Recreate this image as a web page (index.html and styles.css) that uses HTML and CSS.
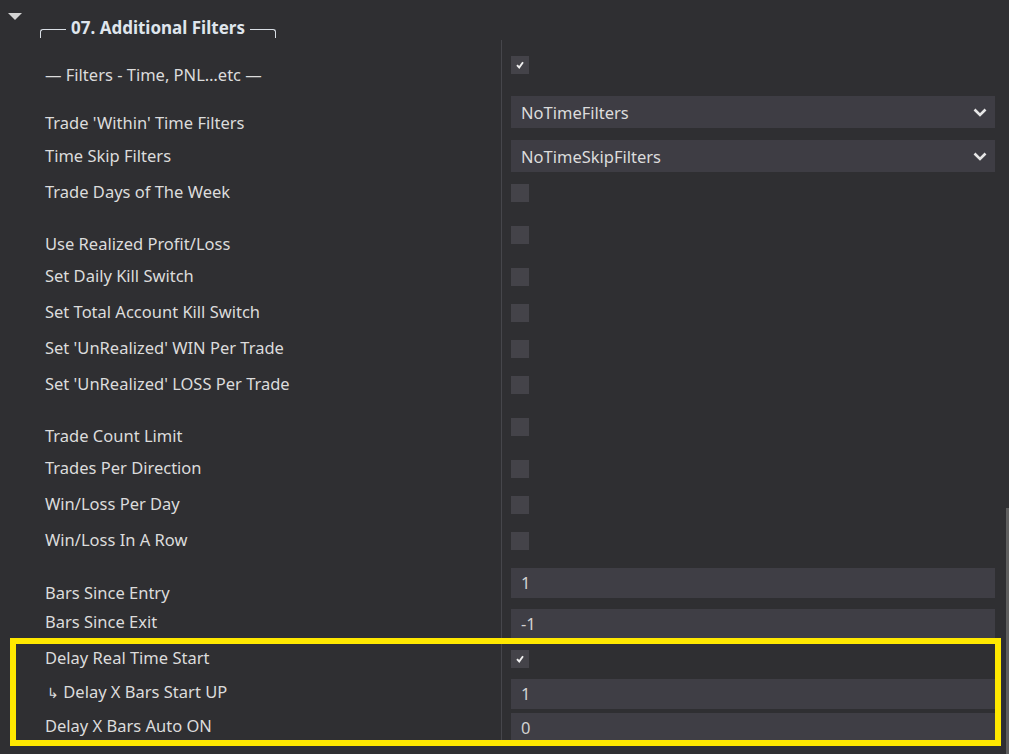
FILE: index.html
```html
<!DOCTYPE html>
<html lang="en">
<head>
    <meta charset="UTF-8">
    <title>07. Additional Filters</title>
    <link rel="stylesheet" href="styles.css">
</head>
<body>
    <div class="window">
        <div class="grid">
            <!-- Category header -->
            <div class="category">
                <span class="toggle"></span>
                <span class="bracket left"></span>
                <span class="category-title">07. Additional Filters</span>
                <span class="bracket right"></span>
            </div>

            <div class="row row-heading">
                <div class="label">— Filters - Time, PNL…etc —</div>
                <div class="value"><span class="check on"><svg viewBox="0 0 8 8" width="8" height="8"><path d="M1 4.2 L3.2 6.5 L7 1.2" fill="none" stroke="#f0f0f0" stroke-width="1.9"/></svg></span></div>
            </div>
            <div class="row row-select-lead">
                <div class="label">Trade 'Within' Time Filters</div>
                <div class="value">
                    <div class="select">NoTimeFilters<svg viewBox="0 0 14 9" width="14" height="9"><path d="M1.5 1.5 L7 7 L12.5 1.5" fill="none" stroke="#e6e6e6" stroke-width="2.6"/></svg></div>
                </div>
            </div>
            <div class="row row-select">
                <div class="label">Time Skip Filters</div>
                <div class="value">
                    <div class="select">NoTimeSkipFilters<svg viewBox="0 0 14 9" width="14" height="9"><path d="M1.5 1.5 L7 7 L12.5 1.5" fill="none" stroke="#e6e6e6" stroke-width="2.6"/></svg></div>
                </div>
            </div>
            <div class="row">
                <div class="label">Trade Days of The Week</div>
                <div class="value"><span class="check"></span></div>
            </div>

            <div class="row row-lead">
                <div class="label">Use Realized Profit/Loss</div>
                <div class="value"><span class="check"></span></div>
            </div>
            <div class="row">
                <div class="label">Set Daily Kill Switch</div>
                <div class="value"><span class="check"></span></div>
            </div>
            <div class="row">
                <div class="label">Set Total Account Kill Switch</div>
                <div class="value"><span class="check"></span></div>
            </div>
            <div class="row">
                <div class="label">Set 'UnRealized' WIN Per Trade</div>
                <div class="value"><span class="check"></span></div>
            </div>
            <div class="row">
                <div class="label">Set 'UnRealized' LOSS Per Trade</div>
                <div class="value"><span class="check"></span></div>
            </div>

            <div class="row row-lead">
                <div class="label">Trade Count Limit</div>
                <div class="value"><span class="check"></span></div>
            </div>
            <div class="row">
                <div class="label">Trades Per Direction</div>
                <div class="value"><span class="check"></span></div>
            </div>
            <div class="row">
                <div class="label">Win/Loss Per Day</div>
                <div class="value"><span class="check"></span></div>
            </div>
            <div class="row">
                <div class="label">Win/Loss In A Row</div>
                <div class="value"><span class="check"></span></div>
            </div>

            <div class="row row-num-lead">
                <div class="label">Bars Since Entry</div>
                <div class="value"><div class="num">1</div></div>
            </div>
            <div class="row row-num">
                <div class="label">Bars Since Exit</div>
                <div class="value"><div class="num">-1</div></div>
            </div>

            <!-- Highlighted block -->
            <div class="highlight">
                <div class="row row-check-after">
                    <div class="label">Delay Real Time Start</div>
                    <div class="value"><span class="check on"><svg viewBox="0 0 8 8" width="8" height="8"><path d="M1 4.2 L3.2 6.5 L7 1.2" fill="none" stroke="#f0f0f0" stroke-width="1.9"/></svg></span></div>
                </div>
                <div class="row row-num">
                    <div class="label"><span class="sub-arrow">↳</span> Delay X Bars Start UP</div>
                    <div class="value"><div class="num">1</div></div>
                </div>
                <div class="row row-num">
                    <div class="label">Delay X Bars Auto ON</div>
                    <div class="value"><div class="num">0</div></div>
                </div>
            </div>
        </div>

        <div class="scrollbar"><div class="thumb"></div></div>
    </div>
</body>
</html>
```

FILE: styles.css
```css
/* Property grid - dark theme */
body {
    margin: 0;
    background-color: #2f2f32;
    color: #dcdcdc;
    font-family: "Noto Sans", "Open Sans", sans-serif;
    font-size: 16.5px;
    overflow: hidden;
}

.window {
    display: flex;
    height: 754px;
}

.grid {
    width: 1006px;
}

/* Category header */
.category {
    display: flex;
    height: 40px;
    padding-left: 8px;
}

.toggle {
    width: 0;
    height: 0;
    margin-top: 13px;
    margin-right: 18px;
    border-left: 7px solid transparent;
    border-right: 7px solid transparent;
    border-top: 7px solid #d4d4d4;
}

.bracket {
    width: 25px;
    height: 8px;
    margin-top: 29px;
    border-top: 1.5px solid #d9dee5;
}

.bracket.left {
    border-left: 1.5px solid #d9dee5;
    border-top-left-radius: 3px;
}

.bracket.right {
    border-right: 1.5px solid #d9dee5;
    border-top-right-radius: 3px;
}

.category-title {
    padding: 17px 5px 0;
    line-height: 22px;
    font-size: 17px;
    font-weight: bold;
    color: #dfe5ec;
}

/* Rows */
.row {
    display: flex;
    height: 36px;
}

.label {
    width: 501px;
    box-sizing: border-box;
    padding-left: 45px;
    padding-top: 1px;
    line-height: 22px;
    white-space: nowrap;
}

.value {
    flex: 1;
    border-left: 1px solid #46464b;
    padding: 4px 11px 0 9px;
}

.row-heading { height: 52px; }
.row-heading .label { padding-top: 24px; }
.row-heading .value { padding-top: 16px; }

.row-select-lead { height: 44px; }
.row-select-lead .label { padding-top: 20px; }

.row-select { height: 44px; }
.row-select .label { padding-top: 9px; }

.row-lead { height: 48px; }
.row-lead .label { padding-top: 17px; }
.row-lead .value { padding-top: 10px; }

.row-num-lead { height: 41px; }
.row-num-lead .label { padding-top: 18px; }

.row-num { height: 34px; }
.row-num .label { padding-top: 6px; }

.row-check-after { height: 36px; }
.row-check-after .label { padding-top: 8px; }
.row-check-after .value { padding-top: 11px; }

.sub-arrow {
    font-size: 14px;
    margin-left: 2px;
}

/* Editors */
.check {
    display: flex;
    align-items: center;
    justify-content: center;
    width: 18px;
    height: 18px;
    background-color: #444349;
}

.select {
    display: flex;
    justify-content: space-between;
    align-items: center;
    height: 32px;
    padding: 0 8px 0 10px;
    background-color: #3e3d44;
    color: #dcdcdc;
}

.num {
    height: 30px;
    line-height: 30px;
    padding-left: 10px;
    background-color: #3f3e45;
    color: #d2d2d2;
}

/* Yellow annotation box */
.highlight {
    position: relative;
}

.highlight::after {
    content: "";
    position: absolute;
    top: -1px;
    bottom: -3px;
    left: 10px;
    right: 5px;
    border: 6px solid #ffe800;
}

/* Scrollbar */
.scrollbar {
    width: 3px;
}

.scrollbar .thumb {
    margin-top: 508px;
    height: 246px;
    background-color: #5e5e5e;
}
```
